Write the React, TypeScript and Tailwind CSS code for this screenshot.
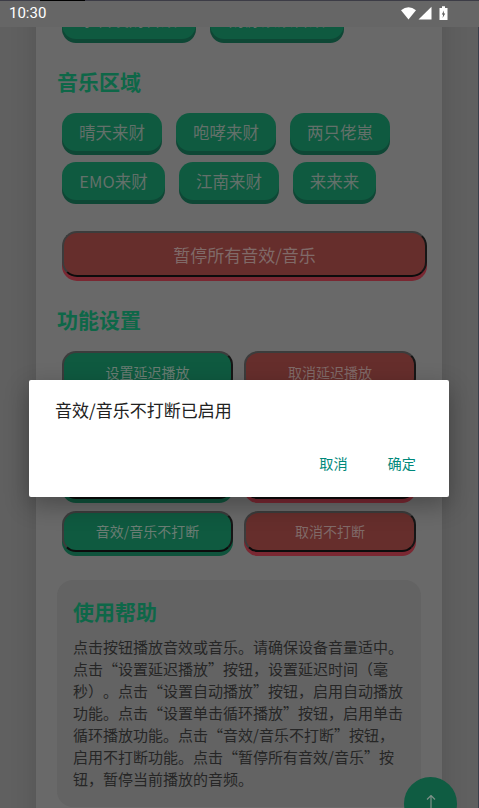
import React from 'react';

const chipRows = [
  [{ label: '晴天来财', w: 'w-[100px]' }, { label: '咆哮来财', w: 'w-[100px]' }, { label: '两只佬崽', w: 'w-[100px]' }],
  [{ label: 'EMO来财', w: 'w-[103px]' }, { label: '江南来财', w: 'w-[100px]' }, { label: '来来来', w: 'w-[83px]' }],
];

const settings = [
  ['设置延迟播放', '取消延迟播放'],
  ['设置自动播放', '取消自动播放'],
  ['设置单击循环播放', '取消单击循环'],
  ['音效/音乐不打断', '取消不打断'],
];

const helpText =
  '点击按钮播放音效或音乐。请确保设备音量适中。点击“设置延迟播放”按钮，设置延迟时间（毫秒）。点击“设置自动播放”按钮，启用自动播放功能。点击“设置单击循环播放”按钮，启用单击循环播放功能。点击“音效/音乐不打断”按钮，启用不打断功能。点击“暂停所有音效/音乐”按钮，暂停当前播放的音频。';

const Chip = ({ label, w }: { label: string; w: string }) => (
  <button className={`${w} h-[38px] rounded-[14px] bg-[#0f5a40] shadow-[0_4px_0_#0e4735] text-[16.5px] leading-none text-[#63706a]`}>
    {label}
  </button>
);

const SettingButton = ({ label, red }: { label: string; red?: boolean }) => (
  <button
    className={`h-[41px] rounded-[14px] border-2 border-[#3c3c3c] border-b-[#0c0c0c] border-r-[#161616] text-[14px] leading-none ${
      red
        ? 'w-[172px] bg-[#662e2c] shadow-[0_4px_0_#7a2832] text-[#806a68]'
        : 'w-[171px] bg-[#0f5a40] shadow-[0_4px_0_#0f533c] text-[#6b7d74]'
    }`}
  >
    {label}
  </button>
);

const SectionTitle = ({ children, className }: { children: React.ReactNode; className: string }) => (
  <h2 className={`ml-[21px] h-[28px] text-[21px] leading-[28px] font-bold text-[#0e6748] ${className}`}>{children}</h2>
);

const StatusBar = () => (
  <div className="relative z-10 h-[27px] shrink-0 bg-[#666666] flex items-center justify-between pl-[9px] pr-[31px]">
    <div className="absolute left-0 top-0 h-[1px] w-full bg-[#3c3c46]" />
    <div className="absolute left-[40px] top-0 h-[1px] w-[45px] bg-black" />
    <span className="text-[15px] leading-none text-white font-['Roboto',sans-serif]">10:30</span>
    <svg width="47" height="16" viewBox="0 0 47 16" className="mt-[1px]">
      <path d="M0 4.2 Q7.5 -1.8 15 4.2 L7.5 13.6 Z" fill="#fff" />
      <path d="M17.5 13.5 L30.5 0.8 V13.5 Z" fill="#fff" />
      <path d="M38.5 2 H41 V0.2 H44 V2 H46.5 V14 H38.5 Z" fill="#fff" />
      <path d="M43 4.5 L40.8 8.6 H42.2 L41.6 12 L44.2 7.6 H42.7 Z" fill="#555" />
    </svg>
  </div>
);

export default function App() {
  return (
    <div className="relative w-[479px] h-[808px] overflow-hidden bg-[#606060] flex flex-col font-['Noto_Sans_CJK_SC','Noto_Sans',sans-serif]">
      <StatusBar />

      <main className="flex-1 min-h-0 overflow-hidden">
        <div className="mx-[36px] w-[406px] bg-[#696969] shadow-[0_0_26px_rgba(0,0,0,0.14)] pb-10">
          <div className="ml-[26px] mt-[-30px] flex gap-[14px]">
            <button className="w-[134px] h-[42px] pt-[1px] rounded-[14px] bg-[#0f5a40] shadow-[0_4px_0_#0e4735] text-[16px] leading-none text-[#63706a]">恭喜发财音效</button>
            <button className="w-[134px] h-[42px] pt-[1px] rounded-[14px] bg-[#0f5a40] shadow-[0_4px_0_#0e4735] text-[16px] leading-none text-[#63706a]">财源滚滚音效</button>
          </div>

          <SectionTitle className="mt-[28px]">音乐区域</SectionTitle>

          <div className="ml-[26px] mt-[18px] flex flex-col gap-[11px]">
            {chipRows.map((row, i) => (
              <div key={i} className="flex gap-[14px]">
                {row.map(chip => (
                  <Chip key={chip.label} label={chip.label} w={chip.w} />
                ))}
              </div>
            ))}
          </div>

          <button className="ml-[26px] mt-[31px] block w-[365px] h-[46px] rounded-[15px] border-2 border-[#3c3c3c] border-b-[#0c0c0c] border-r-[#161616] bg-[#662e2c] shadow-[0_4px_0_#7a2832] text-[17px] leading-none text-[#806a68]">
            暂停所有音效/音乐
          </button>

          <SectionTitle className="mt-[28px]">功能设置</SectionTitle>

          <div className="ml-[26px] mt-[18px] flex flex-col gap-[12.3px]">
            {settings.map(([on, off]) => (
              <div key={on} className="flex gap-[11px]">
                <SettingButton label={on} />
                <SettingButton label={off} red />
              </div>
            ))}
          </div>

          <section className="ml-[21px] mt-[28px] w-[364px] rounded-[16px] bg-[#636363] pl-[16px] pr-[14px] pt-[17px] pb-[16px]">
            <h2 className="h-[28px] text-[21px] leading-[28px] font-bold text-[#0e6748]">使用帮助</h2>
            <p className="mt-[11px] w-[334px] text-[15px] leading-[22.1px] text-[#262626] [text-spacing-trim:space-all]">{helpText}</p>
          </section>
        </div>
      </main>

      {/* 返回顶部 */}
      <button className="absolute left-[404px] top-[777px] w-[53px] h-[53px] rounded-full bg-[#0f5c42] flex justify-center pt-[18px]">
        <svg width="10" height="18" viewBox="0 0 10 18" fill="none" stroke="#7d9088" strokeWidth="1.2">
          <path d="M5 0.5 V18 M1 4.5 L5 0.5 L9 4.5" />
        </svg>
      </button>

      {/* 弹窗 */}
      <div className="absolute left-[29px] top-[380px] w-[420px] h-[117px] rounded-[2px] bg-white shadow-[0_8px_24px_rgba(0,0,0,0.3)] flex flex-col">
        <p className="ml-[26px] mt-[18px] text-[17px] leading-[24px] text-[#212121]">音效/音乐不打断已启用</p>
        <div className="mt-auto mb-[22px] flex justify-end gap-[40px] pr-[33px]">
          <button className="text-[14.2px] leading-[24px] text-[#00897b]">取消</button>
          <button className="text-[14.2px] leading-[24px] text-[#00897b]">确定</button>
        </div>
      </div>

      <div className="absolute right-0 top-[27px] bottom-0 w-[1px] bg-[#3a3f4c]" />
    </div>
  );
}
